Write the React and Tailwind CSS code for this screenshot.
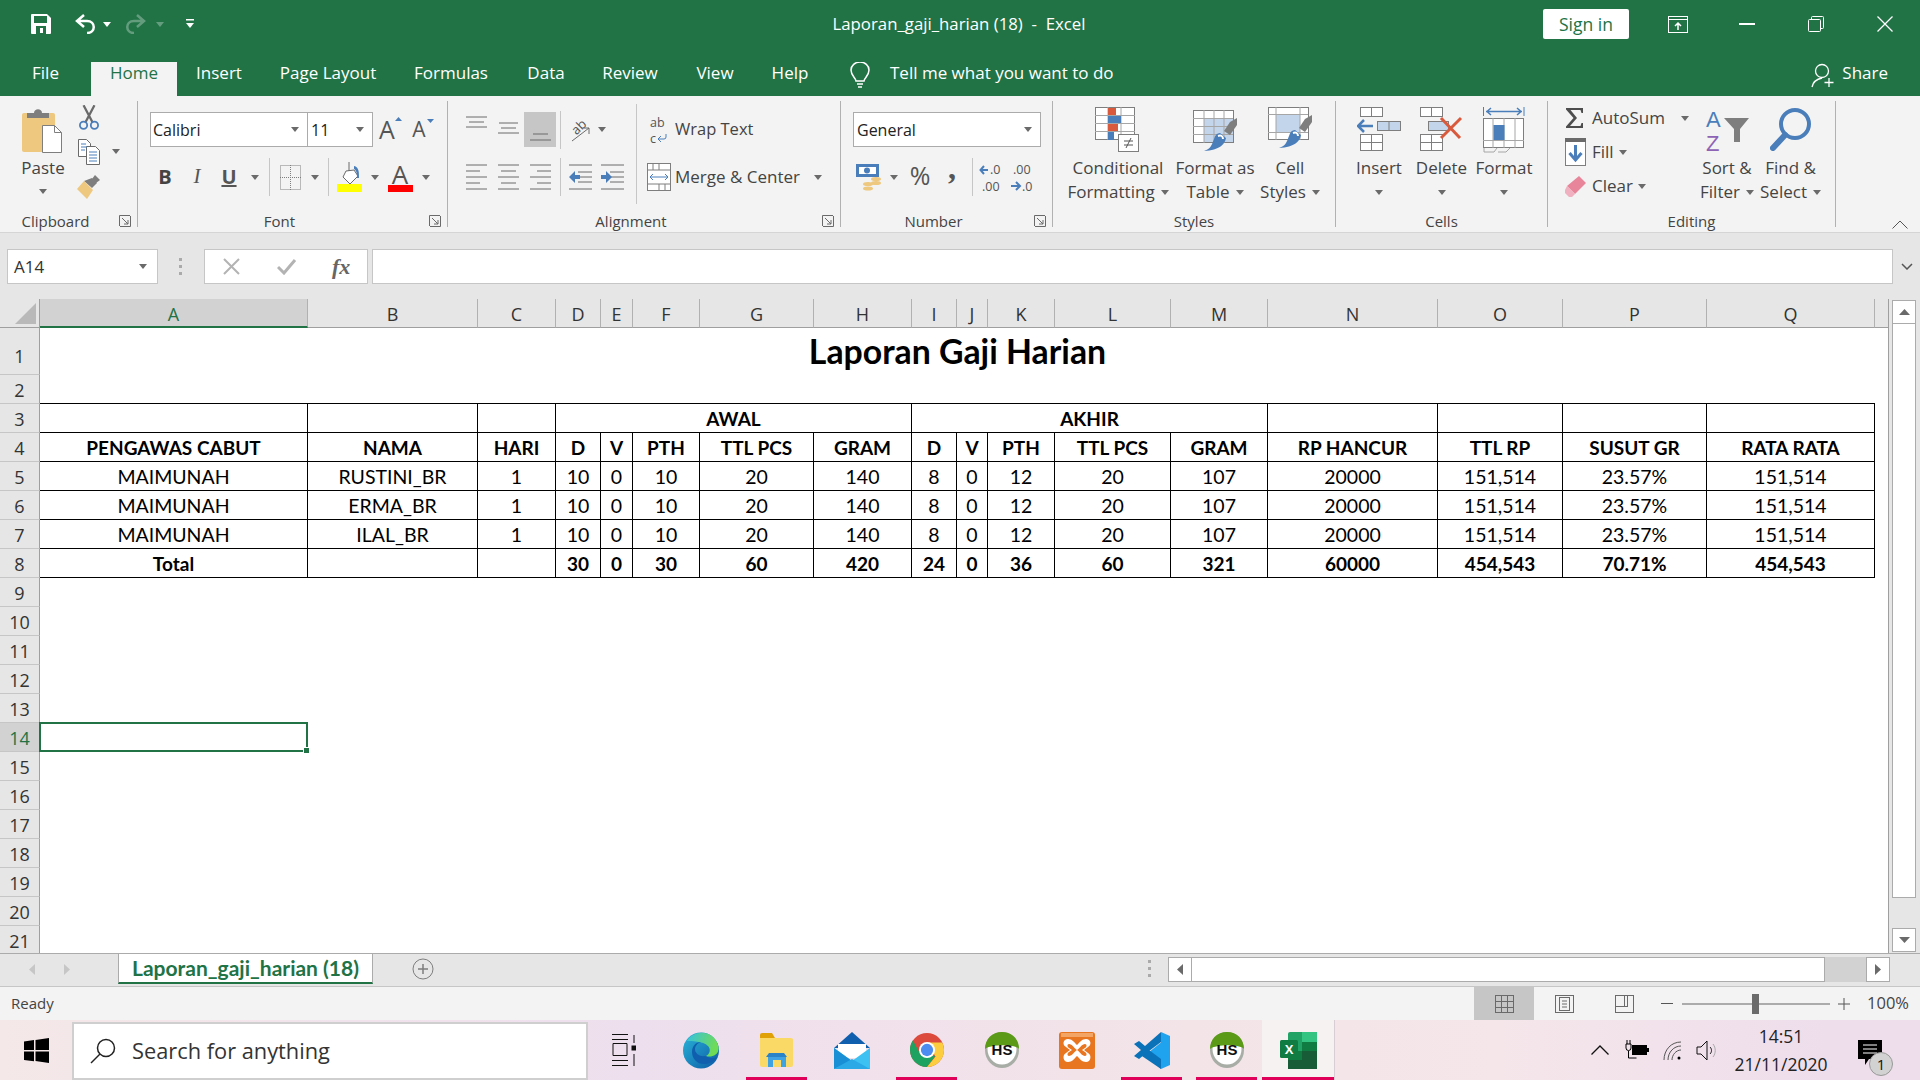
import React from "react";

const columns = ["A","B","C","D","E","F","G","H","I","J","K","L","M","N","O","P","Q"];

const headRow = ["PENGAWAS CABUT","NAMA","HARI","D","V","PTH","TTL PCS","GRAM","D","V","PTH","TTL PCS","GRAM","RP HANCUR","TTL RP","SUSUT GR","RATA RATA"];
const dataRow = (name) => ["MAIMUNAH",name,"1","10","0","10","20","140","8","0","12","20","107","20000","151,514","23.57%","151,514"];
const totalRow = ["Total","","","30","0","30","60","420","24","0","36","60","321","60000","454,543","70.71%","454,543"];

const Caret = ({ color = "#6a6a6a", w = 8, h = 5 }) => (
    <svg width={w} height={h} viewBox="0 0 8 5" className="shrink-0"><path d="M0 0h8L4 5z" fill={color} /></svg>
);

const Launcher = () => (
    <svg width="12" height="12" viewBox="0 0 12 12" fill="none" stroke="#6a6a6a"><path d="M.5 11V.5H11M.5 .5" /><path d="M3 3l6 6M9 5v4H5M11.5 1v10.5H1" /></svg>
);

const VSep = () => <div className="w-px h-[38px] bg-[#c6c6c6] mx-[4px]" />;

function Group({ width, label, launcher, children }) {
    return (
        <div className={`${width} h-[126px] mt-[5px] border-r border-[#b1b1b1] flex flex-col shrink-0`}>
            <div className="h-[106px] shrink-0">{children}</div>
            <div className="flex items-center h-[20px] shrink-0 pt-[8px] text-[15px] text-[#444]">
                <div className="flex-1 text-center">{label}</div>
                {launcher && <div className="w-[26px] flex justify-center pl-[2px]"><Launcher /></div>}
            </div>
        </div>
    );
}

function BigButton({ width, icon, line1, line2 }) {
    return (
        <div className={`${width} flex flex-col items-center pt-[6px] shrink-0`}>
            <div className="h-[45px] flex items-start justify-center">{icon}</div>
            <div className="mt-[4px] leading-[24px] text-[17px] text-[#444] whitespace-nowrap text-center">{line1}</div>
            <div className="h-[24px] flex items-center justify-center gap-[6px] text-[17px] text-[#444] whitespace-nowrap">
                {line2 && <span>{line2}</span>}
                <Caret />
            </div>
        </div>
    );
}

const Slot = ({ className, children }) => <div className={`${className} flex items-center justify-center shrink-0`}>{children}</div>;

/* --- ribbon icons --- */
const PasteIcon = () => (
    <svg width="42" height="46" viewBox="0 0 42 46">
        <rect x="0" y="6" width="33" height="39" rx="2" fill="#edc87e" />
        <path d="M5 6h7c0-5 8-5 8 0h7v5H5z" fill="#7e7e7e" />
        <path d="M20.5 18.5h12l7 7v20h-19z" fill="#fff" stroke="#7e7e7e" />
        <path d="M32.5 18.5v7h7" fill="none" stroke="#7e7e7e" />
    </svg>
);
const ScissorsIcon = () => (
    <svg width="20" height="26" viewBox="0 0 22 28" fill="none">
        <path d="M5 0l10 19M17 0L7 19" stroke="#6a6a6a" strokeWidth="2.5" />
        <circle cx="5" cy="22" r="4" stroke="#4a7ebb" strokeWidth="2" />
        <circle cx="17" cy="22" r="4" stroke="#4a7ebb" strokeWidth="2" />
    </svg>
);
const CopyIcon = () => (
    <svg width="22" height="26" viewBox="0 0 22 26" fill="#fff" stroke="#6a6a6a">
        <path d="M.5.5h8l4 4v13H.5z" />
        <path d="M8.5 7.5h9l4 4v14h-13z" />
        <path d="M3 5h5M3 8h6M3 11h4M11 13h8M11 16h8M11 19h8M11 22h8" stroke="#4a7ebb" />
    </svg>
);
const BrushIcon = () => (
    <svg width="24" height="25" viewBox="0 0 24 25">
        <path d="M14 5l5 5-5 5L6 8z" fill="#7e7e7e" transform="translate(1 -1)" />
        <path d="M18 1l5 5-4 3-4-4z" fill="#7e7e7e" />
        <path d="M7 7l9 9-6 9-10-10z" fill="#edc87e" />
    </svg>
);
const BordersIcon = () => (
    <svg width="21" height="25" viewBox="0 0 21 25" fill="none" stroke="#7e7e7e" strokeDasharray="1 1">
        <rect x=".5" y=".5" width="20" height="24" /><path d="M10.5 0v25M0 12.5h21" />
    </svg>
);
const FillIcon = () => (
    <svg width="25" height="30" viewBox="0 0 25 30">
        <path d="M9 9l8 -1 4 6-8 8-7-7z" fill="#fff" stroke="#6a6a6a" />
        <path d="M12 0v9" stroke="#6a6a6a" fill="none" />
        <path d="M17 4c5 1 5 6 5 12l-2 0c0-4 0-7-3-9z" fill="#4a7ebb" />
        <rect x="0" y="22" width="25" height="8" fill="#ffff00" />
    </svg>
);
const Lines = ({ rows }) => (
    <svg width="21" height="26" viewBox="0 0 21 26" stroke="#6a6a6a" strokeWidth="1">{rows.map((r, i) => <path key={i} d={r} />)}</svg>
);
const AlignTop = () => <svg width="21" height="12" stroke="#6a6a6a"><path d="M0 1h21M3 6h15M0 11h21" /></svg>;
const AlignMid = () => <svg width="21" height="12" stroke="#6a6a6a"><path d="M1 1h19M3 6h15M0 11h21" /></svg>;
const AlignBot = () => <svg width="21" height="8" stroke="#6a6a6a"><path d="M3 1h15M0 7h21" /></svg>;
const Orientation = () => (
    <svg width="22" height="26" viewBox="0 0 22 26" className="overflow-visible">
        <g transform="rotate(-45 9 10)"><text x="2" y="15" fontSize="13" fill="#555" fontFamily="Open Sans">ab</text></g>
        <path d="M3 24L20 11M14 11h6v6" stroke="#6a6a6a" fill="none" />
    </svg>
);
const Indent = ({ right }) => (
    <svg width="23" height="26" viewBox="0 0 23 26" stroke="#6a6a6a">
        <path d="M0 1h23M9 8h14M9 13h14M9 18h14M0 25h23" />
        {right
            ? <path d="M0 11h5V7l6 6-6 6v-4H0z" fill="#4a7ebb" stroke="none" />
            : <path d="M11 11H6V7l-6 6 6 6v-4h5z" fill="#4a7ebb" stroke="none" />}
    </svg>
);
const WrapIcon = () => (
    <svg width="18" height="30" viewBox="0 0 18 30" className="overflow-visible">
        <text x="0" y="12" fontSize="12.500" fill="#555" fontFamily="Open Sans">ab</text>
        <text x="0" y="28" fontSize="12.500" fill="#555" fontFamily="Open Sans">c</text>
        <path d="M16 19v3a2 2 0 0 1-2 2H9M11 21l-3 3 3 3" stroke="#4a7ebb" fill="none" />
    </svg>
);
const MergeIcon = () => (
    <svg width="24" height="28" viewBox="0 0 24 28" fill="#fff" stroke="#7e7e7e">
        <rect x=".5" y=".5" width="23" height="27" />
        <path d="M0 7h24M0 21h24M12 0v7M12 21v7M6 7V0M18 21v7" />
        <path d="M3 14h18M6 11l-3 3 3 3M18 11l3 3-3 3" stroke="#4a7ebb" fill="none" />
    </svg>
);
const CurrencyIcon = () => (
    <svg width="26" height="27" viewBox="0 0 26 27">
        <rect x="0" y="0" width="23" height="13" fill="#4a7ebb" />
        <rect x="3" y="3" width="17" height="7" fill="#fff" />
        <circle cx="11" cy="6.5" r="3" fill="#4a7ebb" />
        <ellipse cx="20" cy="15" rx="5" ry="2" fill="#edc87e" /><ellipse cx="20" cy="19" rx="5" ry="2" fill="#edc87e" />
        <ellipse cx="12" cy="20" rx="5" ry="2" fill="#edc87e" /><ellipse cx="12" cy="24.5" rx="5" ry="2" fill="#edc87e" />
    </svg>
);
const DecimalIcon = ({ inc }) => (
    <svg width="26" height="32" viewBox="0 0 26 32" fontFamily="Open Sans" fontSize="12.500" fill="#555" className="overflow-visible">
        {inc ? (
            <g>
                <path d="M9 9H2M5 5L1.500 9 5 13" stroke="#4a7ebb" strokeWidth="2" fill="none" />
                <text x="11" y="13">.0</text>
                <text x="3" y="30">.00</text>
            </g>
        ) : (
            <g>
                <text x="3" y="13">.00</text>
                <path d="M1 25h8M6 21l4 4-4 4" stroke="#4a7ebb" strokeWidth="2" fill="none" />
                <text x="12" y="30">.0</text>
            </g>
        )}
    </svg>
);
const CondIcon = () => (
    <svg width="46" height="45" viewBox="0 0 46 45">
        <rect x=".5" y=".5" width="39" height="32" fill="#fff" stroke="#7e7e7e" />
        <path d="M13 0v33M26 0v33M0 8.500h40M0 16.500h40M0 24.500h40" stroke="#a6a6a6" />
        <rect x="13" y="1" width="8" height="7" fill="#d9593d" />
        <rect x="13" y="9" width="13" height="7" fill="#4a7ebb" />
        <rect x="13" y="17" width="10" height="7" fill="#d9593d" />
        <rect x="13" y="25" width="6" height="8" fill="#4a7ebb" />
        <rect x="23.500" y="27.500" width="20" height="17" fill="#fff" stroke="#7e7e7e" />
        <path d="M29 34h9M29 38h9M36 31l-5 10" stroke="#555" fill="none" />
    </svg>
);
const TableStyleIcon = () => (
    <svg width="45" height="42" viewBox="0 0 45 42">
        <rect x=".5" y=".5" width="40" height="32" fill="#fff" stroke="#7e7e7e" />
        <rect x="11" y="9" width="29" height="23" fill="#c2d5ea" />
        <path d="M11 0v33M21 0v33M31 0v33M0 8.500h40M0 16.500h40M0 24.500h40" stroke="#a6a6a6" />
        <path d="M37 12l7-4v7l-7 10-6-4z" fill="#7e7e7e" />
        <path d="M27 23l6 5c-1 6-6 12-22 13 7-2 8-7 10-12 1-4 3-6 6-6z" fill="#4a7ebb" />
        <path d="M25 26c3-1 5 0 5 3" stroke="#fff" strokeWidth="2" fill="none" />
    </svg>
);
const CellStyleIcon = () => (
    <svg width="45" height="42" viewBox="0 0 45 42">
        <rect x=".5" y=".5" width="40" height="32" fill="#fff" stroke="#7e7e7e" />
        <rect x="8" y="8" width="24" height="17" fill="#c2d5ea" />
        <path d="M8 0v33M32 0v33M0 7.500h40M0 25.500h40" stroke="#a6a6a6" />
        <path d="M37 12l7-4v7l-7 10-6-4z" fill="#7e7e7e" />
        <path d="M27 23l6 5c-1 6-6 12-22 13 7-2 8-7 10-12 1-4 3-6 6-6z" fill="#4a7ebb" />
        <path d="M25 26c3-1 5 0 5 3" stroke="#fff" strokeWidth="2" fill="none" />
    </svg>
);
const InsertIcon = () => (
    <svg width="44" height="44" viewBox="0 0 44 44" fill="#fff" stroke="#7e7e7e">
        <rect x="3.500" y=".5" width="22" height="9" /><path d="M14.500 0v10" />
        <rect x="20.500" y="14.500" width="23" height="9" fill="#c2d5ea" /><path d="M32 14v10" />
        <path d="M16 19H2M7 13l-6 6 6 6" stroke="#4a7ebb" strokeWidth="2.500" fill="none" />
        <rect x="3.500" y="27.500" width="22" height="16" /><path d="M14.500 27v17M3 35.500h23" />
    </svg>
);
const DeleteIcon = () => (
    <svg width="44" height="44" viewBox="0 0 44 44" fill="#fff" stroke="#7e7e7e">
        <rect x=".5" y=".5" width="22" height="9" /><path d="M11.500 0v10" />
        <rect x="8.500" y="14.500" width="20" height="9" fill="#c2d5ea" />
        <rect x=".5" y="27.500" width="22" height="16" /><path d="M11.500 27v17M0 35.500h23" />
        <path d="M21 11l19 20M41 11L21 31" stroke="#d9593d" strokeWidth="3" fill="none" />
    </svg>
);
const FormatIcon = () => (
    <svg width="42" height="46" viewBox="0 0 42 46" fill="#fff" stroke="#7e7e7e">
        <path d="M.5 0v9M41 0v9" stroke="#4a7ebb" fill="none" />
        <path d="M3 4.500h36M8 1l-4 3.500 4 3.500M34 1l4 3.500-4 3.500" stroke="#4a7ebb" strokeWidth="1.500" fill="none" />
        <rect x=".5" y="11.500" width="40" height="29" />
        <path d="M10 11v30M21 11v30M32 11v30M0 33.500h41" stroke="#a6a6a6" />
        <rect x="10.500" y="18" width="11" height="15" fill="#4a7ebb" stroke="none" />
        <path d="M1 41v4h10l3-4M15 45h8l4-4" fill="none" stroke="#a6a6a6" />
    </svg>
);
const SigmaIcon = () => <svg width="18" height="20" viewBox="0 0 18 20"><path d="M0 0h17v5h-1.500l-1-3H4.500l6.500 8-7 8h10.500l1-3H17v5H0v-1.500L7.500 10 0 1.500z" fill="#4d4d4d" /></svg>;
const FillDownIcon = () => (
    <svg width="21" height="28" viewBox="0 0 21 28">
        <rect x=".5" y=".5" width="20" height="27" fill="#fff" stroke="#7e7e7e" />
        <rect x="0" y="0" width="21" height="4" fill="#6a6a6a" />
        <path d="M10.500 7v15M4.500 15l6 7 6-7" stroke="#4a7ebb" strokeWidth="3" fill="none" />
    </svg>
);
const EraserIcon = () => (
    <svg width="21" height="21" viewBox="0 0 21 21">
        <path d="M14 0l7 7-11 11-8-8z" fill="#e8859b" />
        <path d="M2 10l8 8-3 3H4l-4-4v-3z" fill="#f0b0bf" />
    </svg>
);
const SortIcon = () => (
    <svg width="44" height="46" viewBox="0 0 44 46" fontFamily="Liberation Sans" fontSize="22" className="overflow-visible">
        <text x="1" y="20" fill="#4a7ebb">A</text>
        <text x="1" y="44" fill="#8e62b5">Z</text>
        <path d="M19 11h25l-9 11v13h-6V22z" fill="#7e7e7e" />
    </svg>
);
const FindIcon = () => (
    <svg width="42" height="44" viewBox="0 0 42 44" fill="none">
        <circle cx="25" cy="17" r="14" stroke="#4a7ebb" strokeWidth="4" />
        <path d="M15 28L3 41" stroke="#4a7ebb" strokeWidth="6" strokeLinecap="round" />
    </svg>
);

/* --- taskbar icons --- */
const EdgeIcon = () => (
    <svg width="37" height="37" viewBox="0 0 37 37">
        <defs>
            <linearGradient id="edgeA" x1="0" y1="0" x2="1" y2="1"><stop offset="0" stopColor="#2ab6d9" /><stop offset="1" stopColor="#0c59a4" /></linearGradient>
            <linearGradient id="edgeB" x1="0" y1="0" x2="1" y2="0.300"><stop offset="0" stopColor="#35c1e1" /><stop offset="1" stopColor="#6fdc55" /></linearGradient>
        </defs>
        <circle cx="18" cy="18.500" r="18" fill="url(#edgeA)" />
        <path d="M4 9C10-2 30-3 35 13c3 9-6 13-12 11 4-2 5-7 2-10C20 9 8 9 4 9z" fill="url(#edgeB)" />
        <path d="M22 24c-6 1-10-3-10-7 0-3 3-6 6-7-5 0-9 4-9 10 0 7 6 13 14 12 5-1 9-3 11-7-3 2-8 1-12-1z" fill="#0f5fae" />
    </svg>
);
const FolderIcon = () => (
    <svg width="33" height="34" viewBox="0 0 33 34">
        <path d="M0 2q0-2 2-2h10l3 5H0z" fill="#e0a106" />
        <path d="M0 5h31q2 0 2 2v25q0 2-2 2H2q-2 0-2-2z" fill="#fbd967" />
        <path d="M6 24h21l-3-4H9z" fill="#2b83c7" />
        <path d="M8 24h18v10h-5v-7h-8v7H8z" fill="#3fa3e3" />
    </svg>
);
const MailIcon = () => (
    <svg width="36" height="37" viewBox="0 0 36 37">
        <path d="M18 0L36 16H0z" fill="#0f5fae" />
        <path d="M4 12h28v14H4z" fill="#fff" />
        <path d="M0 16l18 13 18-13v21H0z" fill="#3dc1f3" />
        <path d="M0 16l18 13L0 37z" fill="#1990d5" />
        <path d="M36 37H0l18-10z" fill="#2aa9e6" />
    </svg>
);
const ChromeIcon = () => (
    <svg width="34" height="36" viewBox="0 0 36 36">
        <circle cx="18" cy="18" r="18" fill="#db4a3c" />
        <path d="M18 36C8 36 0 28 0 18c0-4 1-7 3-10l9 16 15 .1L18 36z" fill="#1da260" />
        <path d="M18 36c10 0 18-8 18-18 0-3-1-6-2-8H18l9 15z" fill="#fbcd3f" />
        <circle cx="18" cy="18" r="8.500" fill="#fff" />
        <circle cx="18" cy="18" r="6.500" fill="#4c8bf0" />
    </svg>
);
const HsIcon = () => (
    <svg width="34" height="36" viewBox="0 0 34 36">
        <ellipse cx="17" cy="18" rx="17" ry="18" fill="#a8aea6" />
        <ellipse cx="17" cy="17" rx="14.500" ry="15.500" fill="#fff" />
        <path d="M0 17C0 7 7 0 17 0s17 7 17 17c-4-5-28-5-34 0z" fill="#5a9a16" />
        <text x="17" y="23" textAnchor="middle" fontFamily="Liberation Sans" fontWeight="700" fontSize="15" fill="#111">HS</text>
    </svg>
);
const XamppIcon = () => (
    <svg width="36" height="37" viewBox="0 0 36 37">
        <rect width="36" height="37" rx="3" fill="#e8751f" />
        <rect x="2" y="1" width="32" height="4" fill="#f2a565" />
        <path d="M9 7c4 0 6 3 9 6 3-3 5-6 9-6 5 0 6 6 2 8l-4 3 4 3c4 2 3 9-2 9-4 0-6-3-9-6-3 3-5 6-9 6-5 0-6-7-2-9l4-3-4-3C3 13 4 7 9 7z" fill="#fff" />
        <path d="M10 12c3 0 5 4 8 6-3 2-5 6-8 6-2 0-2-3 0-4l3-2-3-2c-2-1-2-4 0-4zM26 12c-3 0-5 4-8 6 3 2 5 6 8 6 2 0 2-3 0-4l-3-2 3-2c2-1 2-4 0-4z" fill="#e8751f" />
    </svg>
);
const VscodeIcon = () => (
    <svg width="36" height="37" viewBox="0 0 36 37">
        <path d="M27 0l9 4v29l-9 4-15-14.500 15-12z" fill="#1fa3ef" />
        <path d="M27 10L11 22l-6 5-5-3 7-6-7-6 5-3 6 5L27 0z" fill="#0a72b8" />
        <path d="M11 15l16 12v10L5 22z" fill="#0a72b8" />
    </svg>
);
const ExcelIcon = () => (
    <svg width="37" height="37" viewBox="0 0 37 37">
        <rect x="8" y="0" width="29" height="37" rx="2" fill="#21a366" />
        <rect x="22" y="0" width="15" height="10" fill="#33c481" />
        <rect x="8" y="9" width="14" height="10" fill="#21a366" />
        <rect x="22" y="10" width="15" height="9" fill="#107c41" />
        <rect x="8" y="19" width="14" height="9" fill="#107c41" />
        <rect x="22" y="19" width="15" height="9" fill="#185c37" />
        <rect x="8" y="28" width="29" height="9" fill="#185c37" />
        <rect x="0" y="8" width="18" height="18" rx="1.500" fill="#107c41" />
        <text x="9" y="22" textAnchor="middle" fontFamily="Liberation Sans" fontWeight="700" fontSize="13" fill="#fff">X</text>
    </svg>
);

function RowHead({ n, active, tall }) {
    return (
        <div className={`flex justify-center border-r border-b border-r-[#9f9f9f] border-b-[#c6c6c6] text-[18px] font-['Open_Sans',sans-serif] ${tall ? "items-end pb-[4px]" : "items-center pt-[2px]"} ${active ? "bg-[#d2d2d2] text-[#217346]" : "bg-[#e6e6e6] text-[#333]"}`}>
            {n}
        </div>
    );
}

const Cell = ({ children, bold, className = "" }) => (
    <div className={`flex items-center justify-center border-r border-b border-black pt-[2px] text-black whitespace-nowrap ${bold ? "font-bold text-[19px]" : "text-[19.500px]"} ${className}`}>
        {children}
    </div>
);

function Sheet() {
    const blanks = [9, 10, 11, 12, 13, 14, 15, 16, 17, 18, 19, 20, 21];
    const tableRows = [
        { n: 5, cells: dataRow("RUSTINI_BR") },
        { n: 6, cells: dataRow("ERMA_BR") },
        { n: 7, cells: dataRow("ILAL_BR") },
    ];
    return (
        <div className="grid w-[1889px] h-[654px] overflow-hidden content-start bg-white font-['Lato',sans-serif] grid-cols-[40px_268px_170px_78px_45px_32px_67px_114px_98px_45px_31px_67px_116px_97px_170px_125px_144px_168px_14px] grid-rows-[29px_47px_repeat(20,29px)]">
            {/* column headers */}
            <div className="bg-[#e6e6e6] border-r border-b border-[#9f9f9f] flex items-center justify-end pr-[3px]">
                <svg width="21" height="21" viewBox="0 0 21 21"><path d="M21 0v21H0z" fill="#b9b9b9" /></svg>
            </div>
            {columns.map((c, i) => (
                <div
                    key={c}
                    className={`flex items-center justify-center pt-[3px] border-r text-[18px] font-['Open_Sans',sans-serif] ${i === 0 ? "bg-[#d2d2d2] text-[#217346] border-b-2 border-b-[#217346] border-r-[#b1b1b1]" : "bg-[#e6e6e6] text-[#333] border-b border-b-[#9f9f9f] border-r-[#b1b1b1]"}`}
                >
                    {c}
                </div>
            ))}
            <div className="bg-[#e6e6e6] border-r border-b border-[#9f9f9f]" />

            {/* title */}
            <RowHead n={1} tall />
            <div className="col-span-17 flex items-center justify-center text-[33.800px] font-bold text-black">Laporan Gaji Harian</div>
            <div className="border-r border-[#9f9f9f]" />

            <RowHead n={2} />
            <div className="col-span-17 border-b border-black" />
            <div className="border-r border-[#9f9f9f]" />

            {/* row 3, merged groups */}
            <RowHead n={3} />
            <Cell /><Cell /><Cell />
            <Cell bold className="col-span-5">AWAL</Cell>
            <Cell bold className="col-span-5">AKHIR</Cell>
            <Cell /><Cell /><Cell /><Cell />
            <div className="border-r border-[#9f9f9f]" />

            <RowHead n={4} />
            {headRow.map((t, i) => <Cell key={i} bold>{t}</Cell>)}
            <div className="border-r border-[#9f9f9f]" />

            {tableRows.map((r) => (
                <React.Fragment key={r.n}>
                    <RowHead n={r.n} />
                    {r.cells.map((t, i) => <Cell key={i}>{t}</Cell>)}
                    <div className="border-r border-[#9f9f9f]" />
                </React.Fragment>
            ))}

            <RowHead n={8} />
            {totalRow.map((t, i) => <Cell key={i} bold>{t}</Cell>)}
            <div className="border-r border-[#9f9f9f]" />

            {blanks.map((n) => (
                <React.Fragment key={n}>
                    <RowHead n={n} active={n === 14} />
                    {n === 14 ? (
                        <>
                            <div className="relative border-2 border-[#217346] -mt-px -ml-px">
                                <div className="absolute right-[-4px] bottom-[-4px] w-[7px] h-[7px] bg-[#217346] border border-white" />
                            </div>
                            <div className="col-span-16" />
                        </>
                    ) : (
                        <div className="col-span-17" />
                    )}
                    <div className="border-r border-[#9f9f9f]" />
                </React.Fragment>
            ))}
        </div>
    );
}

export default function App() {
    return (
        <div className="w-[1920px] h-[1080px] overflow-hidden flex flex-col font-['Open_Sans',sans-serif] bg-white">
            {/* title bar */}
            <div className="h-12 shrink-0 bg-[#217346] grid grid-cols-[1fr_auto_1fr] items-center text-white">
                <div className="flex items-center pl-[31px]">
                    <svg width="20" height="20" viewBox="0 0 20 20"><path d="M0 1q0-1 1-1h15l4 4v15q0 1-1 1H1q-1 0-1-1z" fill="#fff" /><rect x="3" y="2" width="13" height="7" fill="#217346" /><rect x="5" y="12" width="10" height="8" fill="#217346" /><rect x="9" y="14" width="3" height="5" fill="#fff" /></svg>
                    <svg className="ml-[23px]" width="22" height="20" viewBox="0 0 22 20" fill="none" stroke="#fff" strokeWidth="2.500"><path d="M10 1L3 7l7 6M3 7h10c9 0 9 12 0 12" /></svg>
                    <div className="ml-[7px]"><Caret color="#fff" /></div>
                    <svg className="ml-[14px] opacity-30" width="22" height="20" viewBox="0 0 22 20" fill="none" stroke="#fff" strokeWidth="2.500"><path d="M12 1l7 6-7 6M19 7H9c-9 0-9 12 0 12" /></svg>
                    <div className="ml-[9px] opacity-30"><Caret color="#fff" /></div>
                    <svg className="ml-[22px]" width="8" height="10" viewBox="0 0 8 10" fill="#fff"><rect width="8" height="1.500" /><path d="M0 4h8L4 9z" /></svg>
                </div>
                <div className="text-[16.800px] whitespace-pre pr-[2px]">Laporan_gaji_harian (18)  -  Excel</div>
                <div className="flex items-center justify-end">
                    <div className="w-[86px] h-[30px] bg-white rounded-[2px] flex items-center justify-center text-[#217346] text-[17.500px]">Sign in</div>
                    <div className="w-[14px]" />
                    <Slot className="w-[69px]">
                        <svg width="20" height="17" viewBox="0 0 20 17" fill="none" stroke="#fff"><rect x=".5" y=".5" width="19" height="16" /><path d="M0 3.500h20" /><path d="M10 14V7M7 10l3-3 3 3" strokeWidth="1.500" /></svg>
                    </Slot>
                    <Slot className="w-[69px]"><div className="w-[16px] h-[1.500px] bg-white" /></Slot>
                    <Slot className="w-[69px]">
                        <svg width="16" height="16" viewBox="0 0 16 16" fill="none" stroke="#fff"><rect x=".5" y="3.500" width="12" height="12" rx="1" /><path d="M3.500 3.500V1.500a1 1 0 0 1 1-1h10a1 1 0 0 1 1 1v10a1 1 0 0 1-1 1h-2" /></svg>
                    </Slot>
                    <Slot className="w-[70px]">
                        <svg width="16" height="16" viewBox="0 0 16 16" stroke="#fff" strokeWidth="1.300"><path d="M.5.5l15 15M15.500.5l-15 15" /></svg>
                    </Slot>
                </div>
            </div>

            {/* tabs */}
            <div className="h-12 shrink-0 bg-[#217346] flex items-end text-white text-[17px]">
                {[
                    ["File", "w-[91px]"],
                    ["Home", "w-[86px]"],
                    ["Insert", "w-[84px]"],
                    ["Page Layout", "w-[134px]"],
                    ["Formulas", "w-[112px]"],
                    ["Data", "w-[78px]"],
                    ["Review", "w-[90px]"],
                    ["View", "w-[80px]"],
                    ["Help", "w-[70px]"],
                ].map(([t, w]) => (
                    <div key={t} className={`${w} h-[34px] text-center leading-[22px] whitespace-nowrap ${t === "Home" ? "bg-[#f3f3f3] text-[#217346]" : ""}`}>{t}</div>
                ))}
                <div className="h-[34px] flex items-start">
                    <svg className="ml-[25px]" width="20" height="28" viewBox="0 0 20 28" fill="none" stroke="#fff" strokeWidth="1.500"><path d="M6 19c0-3-5-5-5-11a9 8 0 0 1 18 0c0 6-5 8-5 11z" /><path d="M7 22h6M8 25h4" /></svg>
                    <div className="ml-[20px] leading-[22px]">Tell me what you want to do</div>
                </div>
                <div className="ml-auto h-[34px] flex items-start pr-[32px]">
                    <svg className="mt-[1px]" width="24" height="25" viewBox="0 0 24 25" fill="none" stroke="#fff" strokeWidth="1.300"><circle cx="11" cy="8" r="6.500" /><path d="M1 24c1-5 5-8 10-9M18 15v9M13.500 19.500h9" /></svg>
                    <div className="ml-[7px] leading-[22px]">Share</div>
                </div>
            </div>

            {/* ribbon */}
            <div className="h-[137px] shrink-0 bg-[#f3f3f3] border-b border-[#d5d5d5] flex text-[#444]">
                <Group width="w-[138px]" label="Clipboard" launcher>
                    <div className="flex">
                        <div className="ml-[18px] w-[50px] flex flex-col items-center pt-[6px]">
                            <PasteIcon />
                            <div className="mt-[3px] text-[17px] leading-[24px]">Paste</div>
                            <div className="mt-[9px]"><Caret /></div>
                        </div>
                        <div className="ml-[6px] flex flex-col">
                            <Slot className="w-[30px] h-[33px]"><ScissorsIcon /></Slot>
                            <div className="flex items-center">
                                <Slot className="w-[30px] h-[35px]"><CopyIcon /></Slot>
                                <div className="ml-[8px]"><Caret /></div>
                            </div>
                            <Slot className="w-[30px] h-[35px]"><BrushIcon /></Slot>
                        </div>
                    </div>
                </Group>

                <Group width="w-[310px]" label="Font" launcher>
                    <div className="flex items-center pl-[12px] pt-[11px] h-[46px]">
                        <div className="w-[158px] h-[35px] bg-white border border-[#ababab] flex items-center justify-between pl-[2px] pr-[8px] text-[16px] text-[#222]">Calibri<Caret /></div>
                        <div className="w-[66px] h-[35px] -ml-px bg-white border border-[#ababab] flex items-center justify-between pl-[3px] pr-[8px] text-[16px] text-[#222]">11<Caret /></div>
                        <div className="w-[30px] ml-[-1px] flex justify-center text-[25px] text-[#555] relative">
                            A
                            <svg className="absolute right-[0px] top-[6px]" width="7" height="4"><path d="M0 4h7L3.500 0z" fill="#4a7ebb" /></svg>
                        </div>
                        <div className="w-[30px] ml-[2px] flex justify-center text-[21px] text-[#555] relative">
                            A
                            <svg className="absolute right-[0px] top-[5px]" width="7" height="4"><path d="M0 0h7L3.500 4z" fill="#4a7ebb" /></svg>
                        </div>
                    </div>
                    <div className="flex items-center pl-[11px] mt-[11px] h-[38px]">
                        <Slot className="w-[32px] text-[20px] font-bold text-[#444]">B</Slot>
                        <Slot className="w-[32px] text-[21px] italic font-['Liberation_Serif',serif] text-[#555]">I</Slot>
                        <Slot className="w-[32px] text-[20px] font-bold text-[#555] underline">U</Slot>
                        <Slot className="w-[20px]"><Caret /></Slot>
                        <VSep />
                        <Slot className="w-[32px]"><BordersIcon /></Slot>
                        <Slot className="w-[18px]"><Caret /></Slot>
                        <VSep />
                        <Slot className="w-[32px]"><FillIcon /></Slot>
                        <Slot className="w-[19px]"><Caret /></Slot>
                        <div className="w-[32px] flex flex-col items-center shrink-0 leading-[22px] text-[26px] text-[#555] font-['Open_Sans',sans-serif]">
                            A
                            <div className="w-[25px] h-[7px] bg-[#ff0000]" />
                        </div>
                        <Slot className="w-[20px]"><Caret /></Slot>
                    </div>
                </Group>

                <Group width="w-[393px]" label="Alignment" launcher>
                    <div className="flex">
                        <div className="flex flex-col pl-[12px]">
                            <div className="flex items-center pt-[11px] h-[46px]">
                                <Slot className="w-[32px] mt-[-16px]"><AlignTop /></Slot>
                                <Slot className="w-[32px] mt-[-4px]"><AlignMid /></Slot>
                                <Slot className="w-[32px] h-[35px] bg-[#c6c6c6] pt-[14px]"><AlignBot /></Slot>
                                <VSep />
                                <Slot className="w-[30px]"><Orientation /></Slot>
                                <Slot className="w-[14px]"><Caret /></Slot>
                            </div>
                            <div className="flex items-center mt-[11px] h-[38px]">
                                <Slot className="w-[32px]"><Lines rows={["M0 1h21","M0 7h14","M0 13h21","M0 19h14","M0 25h21"]} /></Slot>
                                <Slot className="w-[32px]"><Lines rows={["M0 1h21","M3 7h15","M0 13h21","M3 19h15","M0 25h21"]} /></Slot>
                                <Slot className="w-[32px]"><Lines rows={["M0 1h21","M7 7h14","M0 13h21","M7 19h14","M0 25h21"]} /></Slot>
                                <VSep />
                                <Slot className="w-[30px]"><Indent /></Slot>
                                <Slot className="w-[34px]"><Indent right /></Slot>
                            </div>
                        </div>
                        <div className="w-px h-[100px] bg-[#c6c6c6] mt-[3px] ml-[7px]" />
                        <div className="flex flex-col pl-[10px]">
                            <div className="flex items-center pt-[11px] h-[46px] text-[16.500px]">
                                <Slot className="w-[24px]"><WrapIcon /></Slot>
                                <span className="ml-[4px]">Wrap Text</span>
                            </div>
                            <div className="flex items-center mt-[11px] h-[38px] text-[17px]">
                                <Slot className="w-[24px]"><MergeIcon /></Slot>
                                <span className="ml-[4px] w-[139px] whitespace-nowrap">Merge &amp; Center</span>
                                <Caret />
                            </div>
                        </div>
                    </div>
                </Group>

                <Group width="w-[212px]" label="Number" launcher>
                    <div className="flex items-center pl-[12px] pt-[11px] h-[46px]">
                        <div className="w-[188px] h-[35px] bg-white border border-[#ababab] flex items-center justify-between pl-[3px] pr-[8px] text-[16px] text-[#222]">General<Caret /></div>
                    </div>
                    <div className="flex items-center pl-[13px] mt-[11px] h-[38px]">
                        <Slot className="w-[30px]"><CurrencyIcon /></Slot>
                        <Slot className="w-[20px]"><Caret /></Slot>
                        <Slot className="w-[32px] text-[25px] text-[#555] pb-[3px]">%</Slot>
                        <Slot className="w-[32px] text-[32px] font-bold font-['Liberation_Serif',serif] text-[#555] pb-[18px]">,</Slot>
                        <div className="w-px h-[38px] bg-[#c6c6c6] ml-[4px]" />
                        <Slot className="w-[38px]"><DecimalIcon inc /></Slot>
                        <Slot className="w-[24px]"><DecimalIcon /></Slot>
                    </div>
                </Group>

                <Group width="w-[283px]" label="Styles">
                    <div className="flex pl-[17px]">
                        <BigButton width="w-[96px]" icon={<CondIcon />} line1="Conditional" line2="Formatting" />
                        <BigButton width="w-[98px]" icon={<div className="pt-[3px]"><TableStyleIcon /></div>} line1="Format as" line2="Table" />
                        <BigButton width="w-[52px]" icon={<CellStyleIcon />} line1="Cell" line2="Styles" />
                    </div>
                </Group>

                <Group width="w-[212px]" label="Cells">
                    <div className="flex pl-[12px]">
                        <BigButton width="w-[62px]" icon={<InsertIcon />} line1="Insert" />
                        <BigButton width="w-[63px]" icon={<DeleteIcon />} line1="Delete" />
                        <BigButton width="w-[62px]" icon={<FormatIcon />} line1="Format" />
                    </div>
                </Group>

                <Group width="w-[288px]" label="Editing">
                    <div className="flex">
                        <div className="w-[147px] pl-[15px] flex flex-col text-[17px] shrink-0">
                            <div className="h-[34px] flex items-center">
                                <Slot className="w-[24px]"><SigmaIcon /></Slot>
                                <span className="ml-[5px] w-[89px] whitespace-nowrap">AutoSum</span>
                                <Caret />
                            </div>
                            <div className="h-[34px] flex items-center">
                                <Slot className="w-[24px]"><FillDownIcon /></Slot>
                                <span className="ml-[5px] mr-[5px]">Fill</span>
                                <Caret />
                            </div>
                            <div className="h-[34px] flex items-center">
                                <Slot className="w-[24px]"><EraserIcon /></Slot>
                                <span className="ml-[5px] mr-[5px]">Clear</span>
                                <Caret />
                            </div>
                        </div>
                        <BigButton width="w-[64px]" icon={<SortIcon />} line1="Sort &" line2="Filter" />
                        <BigButton width="w-[63px]" icon={<FindIcon />} line1="Find &" line2="Select" />
                    </div>
                </Group>

                <div className="flex-1 flex items-end justify-end pr-[12px] pb-[3px]">
                    <svg width="16" height="9" viewBox="0 0 16 9" fill="none" stroke="#555"><path d="M.5 8.500L8 1l7.500 7.500" /></svg>
                </div>
            </div>

            {/* formula bar */}
            <div className="h-[66px] shrink-0 bg-[#e6e6e6] flex items-start pt-[16px]">
                <div className="ml-[7px] w-[151px] h-[35px] bg-white border border-[#c6c6c6] flex items-center justify-between pl-[6px] pr-[10px] text-[17px] text-[#333]">A14<Caret /></div>
                <div className="w-[46px] h-[35px] flex items-center justify-center">
                    <svg width="4" height="18" fill="#aaa"><rect width="3" height="3" /><rect y="7" width="3" height="3" /><rect y="14" width="3" height="3" /></svg>
                </div>
                <div className="w-[164px] h-[35px] bg-white border border-[#c6c6c6] flex items-center pl-[18px]">
                    <svg width="17" height="17" viewBox="0 0 17 17" stroke="#b3b3b3" strokeWidth="2"><path d="M1 1l15 15M16 1L1 16" /></svg>
                    <svg className="ml-[37px]" width="20" height="17" viewBox="0 0 20 17" fill="none" stroke="#b3b3b3" strokeWidth="3"><path d="M1 9l6 6L18 2" /></svg>
                    <span className="ml-[35px] text-[22px] italic font-bold font-['Liberation_Serif',serif] text-[#666]">fx</span>
                </div>
                <div className="ml-[4px] w-[1521px] h-[35px] bg-white border border-[#c6c6c6]" />
                <div className="flex-1 h-[35px] flex items-center justify-center">
                    <svg width="12" height="7" viewBox="0 0 12 7" fill="none" stroke="#555" strokeWidth="1.500"><path d="M1 1l5 5 5-5" /></svg>
                </div>
            </div>

            {/* sheet and vertical scrollbar */}
            <div className="h-[654px] shrink-0 flex bg-[#e6e6e6]">
                <Sheet />
                <div className="flex-1 pl-[3px] pr-[4px] pt-px flex flex-col">
                    <div className="h-[24px] bg-white border border-[#ababab] flex items-center justify-center"><svg width="11" height="6"><path d="M0 6h11L5.500 0z" fill="#6a6a6a" /></svg></div>
                    <div className="h-[574px] bg-white border-x border-b border-[#ababab]" />
                    <div className="flex-1" />
                    <div className="h-[24px] mb-px bg-white border border-[#ababab] flex items-center justify-center"><svg width="11" height="6"><path d="M0 0h11L5.500 6z" fill="#6a6a6a" /></svg></div>
                </div>
            </div>

            {/* sheet tabs */}
            <div className="h-[34px] shrink-0 bg-[#e6e6e6] border-t border-b border-t-[#ababab] border-b-[#c6c6c6] flex items-start">
                <div className="w-[118px] h-[30px] flex items-center">
                    <svg className="ml-[29px]" width="6" height="11"><path d="M6 0v11L0 5.500z" fill="#c6c6c6" /></svg>
                    <svg className="ml-[29px]" width="6" height="11"><path d="M0 0v11l6-5.500z" fill="#c6c6c6" /></svg>
                </div>
                <div className="w-[255px] h-[30px] bg-white border-x border-b-2 border-x-[#ababab] border-b-[#217346] flex items-center justify-center font-['Lato',sans-serif] font-bold text-[#217346] text-[21px] whitespace-nowrap">Laporan_gaji_harian (18)</div>
                <Slot className="ml-[39px] w-[22px] h-[30px]">
                    <svg width="22" height="22" viewBox="0 0 22 22" fill="none" stroke="#7e7e7e"><circle cx="11" cy="11" r="10" /><path d="M11 6v10M6 11h10" strokeWidth="1.500" /></svg>
                </Slot>
                <Slot className="ml-[712px] w-[8px] h-[30px]">
                    <svg width="4" height="18" fill="#aaa"><rect width="3" height="3" /><rect y="7" width="3" height="3" /><rect y="14" width="3" height="3" /></svg>
                </Slot>
                <div className="ml-[14px] mt-[3px] w-[722px] h-[25px] flex">
                    <div className="w-[24px] bg-white border border-[#ababab] flex items-center justify-center"><svg width="6" height="11"><path d="M6 0v11L0 5.500z" fill="#6a6a6a" /></svg></div>
                    <div className="w-[634px] -ml-px bg-white border border-[#ababab]" />
                    <div className="w-[41px] bg-[#d2d2d2]" />
                    <div className="w-[24px] bg-white border border-[#ababab] flex items-center justify-center"><svg width="6" height="11"><path d="M0 0v11l6-5.500z" fill="#6a6a6a" /></svg></div>
                </div>
            </div>

            {/* status bar */}
            <div className="h-[33px] shrink-0 bg-[#f3f3f3] flex items-center text-[15px] text-[#444]">
                <span className="ml-[11px]">Ready</span>
                <div className="ml-auto flex items-center h-full">
                    <Slot className="w-[60px] h-full bg-[#c6c6c6]">
                        <svg width="19" height="18" viewBox="0 0 19 18" fill="none" stroke="#6a6a6a"><rect x=".5" y=".5" width="18" height="17" /><path d="M6.500 0v18M12.500 0v18M0 6.500h19M0 12.500h19" /></svg>
                    </Slot>
                    <Slot className="w-[60px] h-full">
                        <svg width="19" height="18" viewBox="0 0 19 18" fill="none" stroke="#6a6a6a"><rect x=".5" y=".5" width="18" height="17" /><rect x="4.500" y="2.500" width="10" height="13" /><path d="M7 6h5M7 9h5M7 12h5" /></svg>
                    </Slot>
                    <Slot className="w-[60px] h-full">
                        <svg width="19" height="18" viewBox="0 0 19 18" fill="none" stroke="#6a6a6a"><rect x=".5" y=".5" width="18" height="17" /><path d="M9.500 0v12M0 11.500h13M12.500 0v12" /></svg>
                    </Slot>
                    <div className="ml-[7px] w-[12px] h-px bg-[#555]" />
                    <div className="ml-[9px] w-[148px] h-[2px] bg-[#ababab] relative">
                        <div className="absolute left-[70px] top-[-9px] w-[7px] h-[20px] bg-[#6a6a6a]" />
                    </div>
                    <svg className="ml-[8px]" width="12" height="12" stroke="#555"><path d="M6 0v12M0 6h12" /></svg>
                    <span className="ml-[17px] mr-[11px] text-[16.500px] text-[#444]">100%</span>
                </div>
            </div>

            {/* taskbar */}
            <div className="h-[60px] shrink-0 flex bg-[linear-gradient(90deg,#f5e8e8,#eedfee_33%,#f3e4e8_62%,#f5e6ea_78%,#eedeec_95%)]">
                <Slot className="w-[72px] h-full">
                    <svg width="25" height="25" viewBox="0 0 25 25" fill="#000"><path d="M0 3.500l10-1.400V12H0zM11.500 1.900L25 0v12H11.500zM0 13.500h10v9.800L0 22zM11.500 13.500H25V25l-13.500-1.900z" /></svg>
                </Slot>
                <div className="w-[516px] h-[58px] mt-[2px] bg-white border-2 border-[#cfcfcf] flex items-center">
                    <svg className="ml-[16px]" width="26" height="26" viewBox="0 0 26 26" fill="none" stroke="#222" strokeWidth="1.500"><circle cx="16" cy="10" r="8.500" /><path d="M10 16L1 25" /></svg>
                    <span className="ml-[16px] text-[21.800px] text-[#333]">Search for anything</span>
                </div>
                <Slot className="w-[71px] h-full">
                    <svg width="24" height="32" viewBox="0 0 24 32" fill="none" stroke="#111"><path d="M0 .5h16M0 5.500h16M1 9.500h14v12H1zM0 26.500h16M0 31.500h16M22 1v8M22 20v12" /><rect x="20" y="12" width="4" height="4" fill="#111" /></svg>
                </Slot>
                <div className="flex h-full ml-[5px]">
                    {[
                        [<EdgeIcon />, false],
                        [<FolderIcon />, true],
                        [<MailIcon />, false],
                        [<ChromeIcon />, true],
                        [<HsIcon />, false],
                        [<XamppIcon />, false],
                        [<VscodeIcon />, true],
                        [<HsIcon />, true],
                    ].map(([icon, open], i) => (
                        <div key={i} className="w-[75px] h-full flex flex-col items-center">
                            <div className="h-[57px] flex items-center justify-center pt-[3px]">{icon}</div>
                            {open && <div className="w-[61px] h-[3px] bg-[#e0005a]" />}
                        </div>
                    ))}
                </div>
                <div className="w-[73px] h-full bg-[#f7f2f2] border-r border-[#d8cdd4] flex flex-col items-center -ml-[2px] shrink-0">
                    <div className="h-[57px] flex items-center justify-center pt-[3px]"><ExcelIcon /></div>
                    <div className="w-full h-[3px] bg-[#e0005a]" />
                </div>
                <div className="ml-auto flex items-center h-full">
                    <svg width="18" height="10" viewBox="0 0 18 10" fill="none" stroke="#111" strokeWidth="1.300"><path d="M.5 9.500L9 1l8.500 8.500" /></svg>
                    <svg className="ml-[16px]" width="24" height="20" viewBox="0 0 24 20"><rect x="7" y="5" width="15" height="10" fill="#000" /><rect x="22" y="8" width="2" height="4" fill="#000" /><path d="M1 4v4a2.500 2.500 0 0 0 5 0V4zM2 4V0M5 4V0M3.500 11v7h8" stroke="#000" fill="none" /></svg>
                    <svg className="ml-[14px]" width="19" height="19" viewBox="0 0 19 19" fill="none" stroke="#555"><path d="M1 19C1 9 8 1 18 1M5 19c0-8 6-14 13-14M9 19c0-5 4-10 9-10" /><circle cx="16" cy="17" r="1.500" fill="#000" stroke="none" /></svg>
                    <svg className="ml-[14px]" width="22" height="21" viewBox="0 0 22 21" fill="none" stroke="#111"><path d="M1 7h4l6-6v19l-6-6H1z" /><path d="M14 7c2 2 2 5 0 7" /><path d="M17 4c3 4 3 9 0 13" stroke="#aaa" /></svg>
                    <div className="ml-[13px] w-[100px] flex flex-col items-center text-[#222] text-[17.500px] leading-[28px]">
                        <span>14:51</span>
                        <span className="whitespace-nowrap">21/11/2020</span>
                    </div>
                    <div className="relative ml-[27px] mr-[38px] mt-[6px]">
                        <svg width="24" height="26" viewBox="0 0 24 26"><path d="M0 0h24v19H11l-4 6v-6H0z" fill="#000" /><path d="M5 5h14M5 9h14M5 13h14" stroke="#fff" /></svg>
                        <div className="absolute left-[11px] top-[12px] w-[24px] h-[24px] rounded-full bg-[#d2d2d2] border border-[#999] flex items-center justify-center text-[15px] text-[#111]">1</div>
                    </div>
                </div>
            </div>
        </div>
    );
}
